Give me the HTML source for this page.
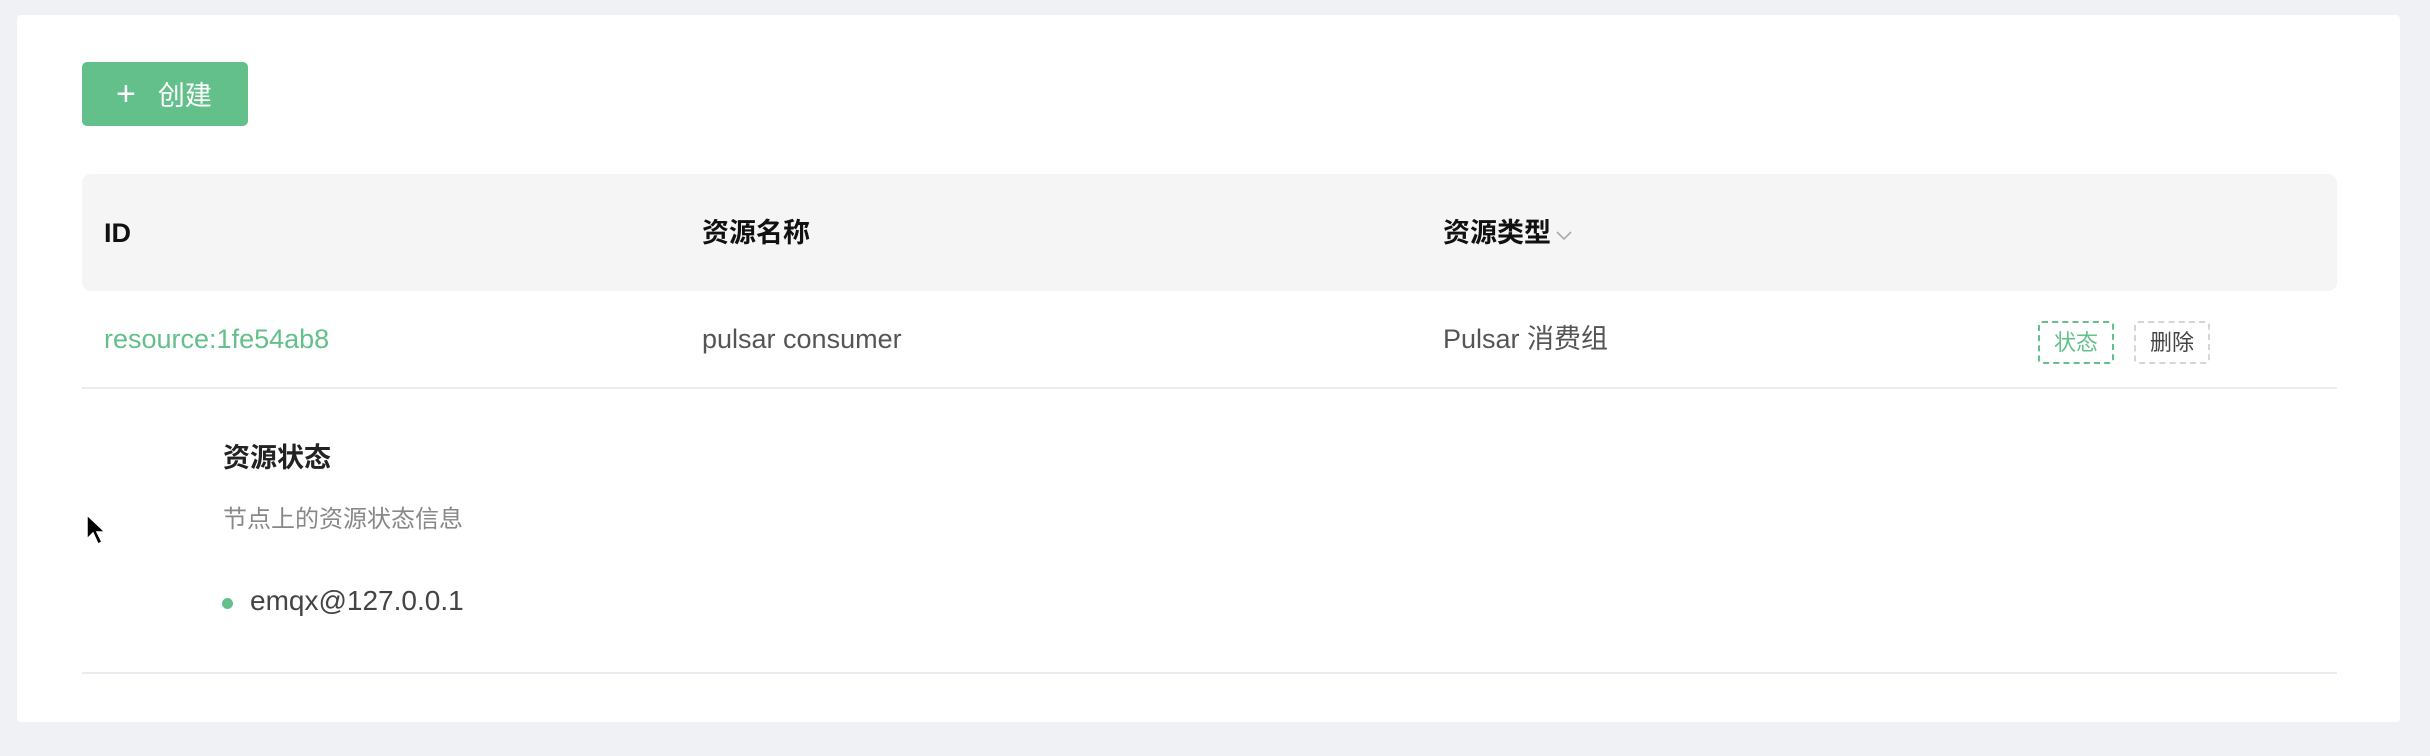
<!DOCTYPE html>
<html><head><meta charset="utf-8"><style>
*{margin:0;padding:0;box-sizing:border-box}
body{width:2430px;height:756px;background:#eff1f5;font-family:"Liberation Sans","Noto Sans CJK SC",sans-serif;position:relative;overflow:hidden}
.card{position:absolute;left:17px;top:15px;width:2383px;height:707px;background:#fff;border-radius:4px}
.abs{position:absolute;white-space:nowrap}
.btn{left:82px;top:62px;width:166px;height:64px;background:#64c08b;border-radius:5px;color:#fff;font-size:27px;line-height:64px;padding-left:34px}
.hdr{left:82px;top:174px;width:2255px;height:117px;background:#f5f5f6;border-radius:9px}
.h{font-size:27px;font-weight:bold;color:#111;top:216px;line-height:34px}
.r{font-size:27px;color:#555;top:322px;line-height:34px}
.tag{top:321px;height:43px;width:76px;border-radius:4px;font-size:22px;line-height:39px;text-align:center}
</style></head><body>
<div class="card"></div>
<div class="abs btn"><span style="font-size:34px;font-weight:300;margin-right:22px">+</span>创建</div>
<div class="abs hdr"></div>
<div class="abs h" style="left:104px">ID</div>
<div class="abs h" style="left:702px">资源名称</div>
<div class="abs h" style="left:1443px">资源类型<svg width="18" height="12" style="margin-left:4px;vertical-align:middle" viewBox="0 0 18 12"><path d="M2 3l7 7 7-7" stroke="#aaa" stroke-width="1.6" fill="none"/></svg></div>
<div class="abs r" style="left:104px;color:#64c08b">resource:1fe54ab8</div>
<div class="abs r" style="left:702px">pulsar consumer</div>
<div class="abs r" style="left:1443px">Pulsar 消费组</div>
<div class="abs tag" style="left:2038px;border:2px dashed #64c08b;color:#64c08b">状态</div>
<div class="abs tag" style="left:2134px;border:2px dashed #d5d5d5;color:#444">删除</div>
<div class="abs" style="left:82px;top:387px;width:2255px;height:2px;background:#e9ecf1"></div>
<div class="abs" style="left:223px;top:436px;font-size:27px;font-weight:bold;color:#222">资源状态</div>
<div class="abs" style="left:223px;top:499px;font-size:24px;color:#888">节点上的资源状态信息</div>
<div class="abs" style="left:222px;top:598px;width:11px;height:11px;border-radius:50%;background:#64c08b"></div>
<div class="abs" style="left:250px;top:585px;font-size:28px;color:#444">emqx@127.0.0.1</div>
<div class="abs" style="left:82px;top:672px;width:2255px;height:2px;background:#e9ecf1"></div>
<svg class="abs" style="left:86px;top:514px" width="22" height="34" viewBox="0 0 22 34"><path d="M1 1v24l6-6 5 11 4-2-5-10h8z" fill="#000" stroke="#fff" stroke-width="1.5"/></svg>
</body></html>
